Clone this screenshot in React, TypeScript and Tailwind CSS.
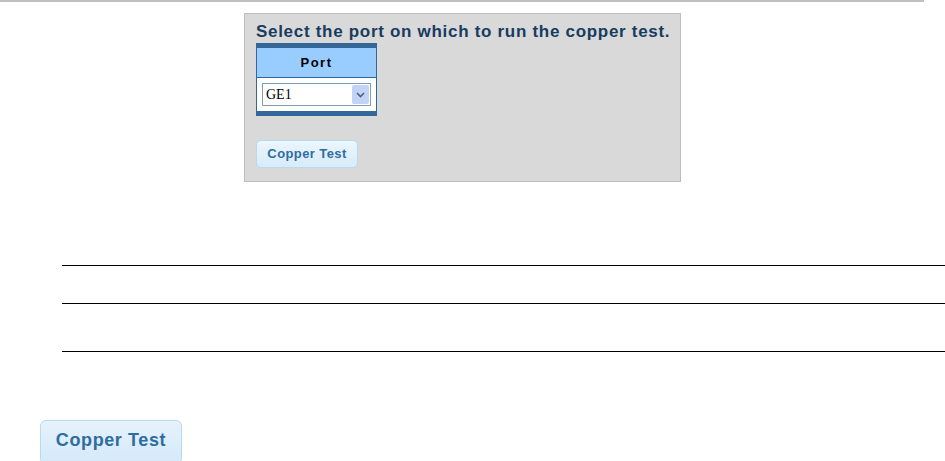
import React from 'react';

const font = { fontFamily: '"Liberation Sans", Arial, sans-serif' };

const PortSelect: React.FC = () => {
  return (
    <div className="flex h-[23px] w-[109px] items-center justify-between border border-[#7f9db9] bg-white pl-[3px] pr-[1px]">
      <span className="text-[14px] leading-none text-black" style={{ fontFamily: '"Liberation Serif", "Times New Roman", serif' }}>
        GE1
      </span>
      <span className="flex h-[19px] w-[17px] items-center justify-center rounded-[2px] bg-[#c3d3f8]">
        <svg width="9" height="6" viewBox="0 0 9 6">
          <path d="M1 1 L4.5 4.5 L8 1" fill="none" stroke="#4d6185" strokeWidth="1.6" />
        </svg>
      </span>
    </div>
  );
};

export default function App() {
  return (
    <div className="relative h-[461px] w-[945px] overflow-hidden bg-white" style={font}>
      <div className="h-[2px] w-[924px] bg-[#c0c0c0]" />

      <div className="ml-[244px] mt-[11px] h-[169px] w-[437px] border border-[#bdbdbd] bg-[#d9d9d9] pl-[11px] pt-[8px]">
        <div className="h-[20px] text-[17px] font-bold leading-[20px] tracking-[0.7px] text-[#173c60]">
          Select the port on which to run the copper test.
        </div>

        <div className="mt-[1px] w-[121px] border-x border-[#336699] bg-white">
          <div className="h-[5px] bg-[#336699]" />
          <div className="flex h-[30px] items-center justify-center border-b border-[#336699] bg-[#99ccff] text-[13px] font-bold tracking-[1.5px] text-black">
            Port
          </div>
          <div className="flex h-[33px] items-center pl-[5px]">
            <PortSelect />
          </div>
          <div className="h-[5px] bg-[#336699]" />
        </div>

        <button className="mt-[24px] flex h-[28px] w-[102px] items-center justify-center rounded-[5px] border border-[#b9d9ef] bg-gradient-to-b from-[#ecf6fd] to-[#d7ebfa] text-[13px] font-bold tracking-[0.4px] text-[#2f6d9f]">
          Copper Test
        </button>
      </div>

      <div className="ml-[62px] mt-[83px] border-t border-black" />
      <div className="ml-[62px] mt-[37px] border-t border-black" />
      <div className="ml-[62px] mt-[47px] border-t border-black" />

      <button className="ml-[40px] mt-[68px] flex h-[44px] w-[142px] items-center justify-center rounded-[6px] border border-[#b9d9ef] bg-gradient-to-b from-[#e6f2fc] to-[#d4e9f9] pb-[3px] text-[18px] font-bold tracking-[0.6px] text-[#2f6d9f]">
        Copper Test
      </button>
    </div>
  );
}
